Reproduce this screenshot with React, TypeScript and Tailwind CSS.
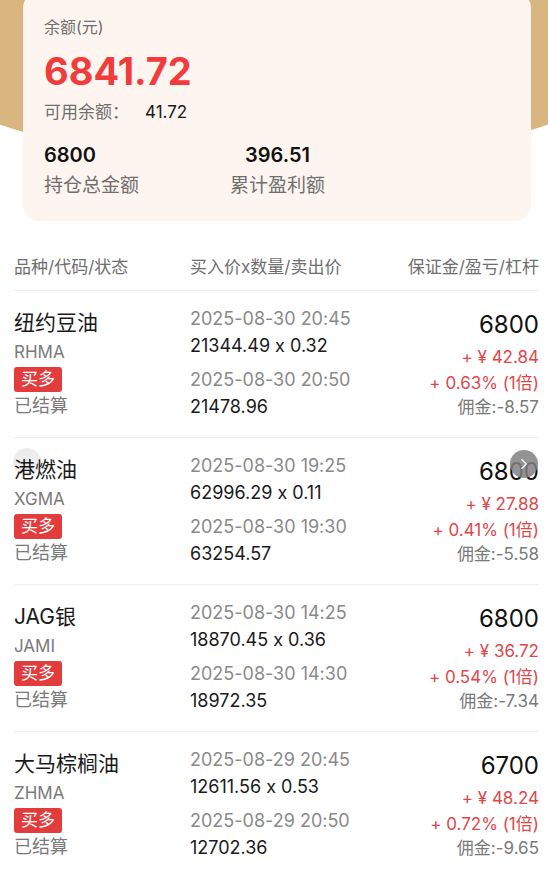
import { ChevronRight } from "lucide-react";

type Trade = {
  name: string;
  code: string;
  side: string;
  status: string;
  openAt: string;
  openPrice: string;
  qty: string;
  closeAt: string;
  closePrice: string;
  margin: string;
  profit: string;
  rate: string;
  fee: string;
};

const trades: Trade[] = [
  {
    name: "纽约豆油",
    code: "RHMA",
    side: "买多",
    status: "已结算",
    openAt: "2025-08-30 20:45",
    openPrice: "21344.49",
    qty: "0.32",
    closeAt: "2025-08-30 20:50",
    closePrice: "21478.96",
    margin: "6800",
    profit: "42.84",
    rate: "0.63%",
    fee: "-8.57",
  },
  {
    name: "港燃油",
    code: "XGMA",
    side: "买多",
    status: "已结算",
    openAt: "2025-08-30 19:25",
    openPrice: "62996.29",
    qty: "0.11",
    closeAt: "2025-08-30 19:30",
    closePrice: "63254.57",
    margin: "6800",
    profit: "27.88",
    rate: "0.41%",
    fee: "-5.58",
  },
  {
    name: "JAG银",
    code: "JAMI",
    side: "买多",
    status: "已结算",
    openAt: "2025-08-30 14:25",
    openPrice: "18870.45",
    qty: "0.36",
    closeAt: "2025-08-30 14:30",
    closePrice: "18972.35",
    margin: "6800",
    profit: "36.72",
    rate: "0.54%",
    fee: "-7.34",
  },
  {
    name: "大马棕榈油",
    code: "ZHMA",
    side: "买多",
    status: "已结算",
    openAt: "2025-08-29 20:45",
    openPrice: "12611.56",
    qty: "0.53",
    closeAt: "2025-08-29 20:50",
    closePrice: "12702.36",
    margin: "6700",
    profit: "48.24",
    rate: "0.72%",
    fee: "-9.65",
  },
];

function TradeRow({ t, nav }: { t: Trade; nav?: boolean }) {
  return (
    <div className="relative flex items-start border-b border-[#efefef] pt-[14px] pb-[17px]">
      {/* 品种 / 代码 / 状态 */}
      <div className="flex w-[176px] flex-col pt-[3px]">
        <span className="text-[21px] leading-[30px] text-[#1a1a1a]">{t.name}</span>
        <span className="text-[17px] leading-[28px] text-[#7a7a7a]">{t.code}</span>
        <span className="mt-[1px] flex h-[25px] w-[48px] items-center justify-center rounded-[3px] bg-[#e23c3c] text-[17px] text-white">
          {t.side}
        </span>
        <span className="mt-[1px] text-[18px] leading-[26px] text-[#7a7a7a]">{t.status}</span>
      </div>

      {/* 买入价 x 数量 / 卖出价 */}
      <div className="flex flex-1 flex-col">
        <span className="text-[18px] leading-[27px] text-[#8a8a8a]">{t.openAt}</span>
        <span className="text-[18px] leading-[27px] text-[#1a1a1a]">
          {t.openPrice} x {t.qty}
        </span>
        <span className="mt-[7px] text-[18px] leading-[27px] text-[#8a8a8a]">{t.closeAt}</span>
        <span className="text-[18px] leading-[27px] text-[#1a1a1a]">{t.closePrice}</span>
      </div>

      {/* 保证金 / 盈亏 / 杠杆 */}
      <div className="flex flex-col items-end pt-[3px] text-right">
        <span className="text-[24px] leading-[34px] text-[#111]">{t.margin}</span>
        <span className="mt-[2px] text-[17px] leading-[26px] text-[#e0474a]">+ ¥ {t.profit}</span>
        <span className="text-[17px] leading-[26px] text-[#e0474a]">+ {t.rate} (1倍)</span>
        <span className="text-[17px] leading-[22px] text-[#7a7a7a]">佣金:{t.fee}</span>
      </div>

      {nav && (
        <>
          <div className="absolute top-[10px] left-[-1px] h-[28px] w-[28px] rounded-full bg-black/[0.07]" />
          <div className="absolute top-[12px] right-[1px] flex h-[28px] w-[28px] items-center justify-center rounded-full bg-[#808080]/85">
            <ChevronRight size={18} strokeWidth={1.5} className="text-white" />
          </div>
        </>
      )}
    </div>
  );
}

export default function App() {
  return (
    <div
      className="relative min-h-screen w-full overflow-hidden bg-white [font-feature-settings:'calt'_0]"
      style={{ fontFamily: 'Inter, "Noto Sans CJK SC", sans-serif' }}
    >
      {/* --- HEADER / 余额卡片 --- */}
      <div className="relative">
        <div className="absolute top-0 left-[-56px] h-[168px] w-[660px] rounded-b-[330px_80px] bg-[#d9b680]" />

        <div className="relative z-10 -mt-[8px] mr-[17px] ml-[23px] rounded-[16px] bg-[#fef5f0] px-[21px] pt-[23px] pb-[22px]">
          <div className="text-[16px] leading-[24px] text-[#6f6f6f]">余额(元)</div>
          <div className="mt-[8px] text-[38px] leading-[48px] font-bold text-[#f23b3b]">6841.72</div>
          <div className="mt-[5px] flex items-center text-[17px] leading-[24px]">
            <span className="text-[#6f6f6f]">可用余额：</span>
            <span className="ml-[16px] text-[#1a1a1a]">41.72</span>
          </div>

          <div className="mt-[17px] flex">
            <div className="flex w-[186px] flex-col">
              <span className="text-[20px] leading-[28px] font-semibold text-[#111]">6800</span>
              <span className="mt-[4px] text-[19px] leading-[26px] text-[#6f6f6f]">持仓总金额</span>
            </div>
            <div className="flex flex-col items-center">
              <span className="text-[20px] leading-[28px] font-semibold text-[#111]">396.51</span>
              <span className="mt-[4px] text-[19px] leading-[26px] text-[#6f6f6f]">累计盈利额</span>
            </div>
          </div>
        </div>
      </div>

      {/* --- 交易列表 --- */}
      <div className="mt-[34px] pr-[9px] pl-[14px]">
        <div className="flex items-center border-b border-[#efefef] pb-[11px] text-[17px] leading-[24px] text-[#6f6f6f]">
          <span className="w-[176px]">品种/代码/状态</span>
          <span className="flex-1">买入价x数量/卖出价</span>
          <span>保证金/盈亏/杠杆</span>
        </div>

        {trades.map((t, i) => (
          <TradeRow key={t.code} t={t} nav={i === 1} />
        ))}
      </div>
    </div>
  );
}
